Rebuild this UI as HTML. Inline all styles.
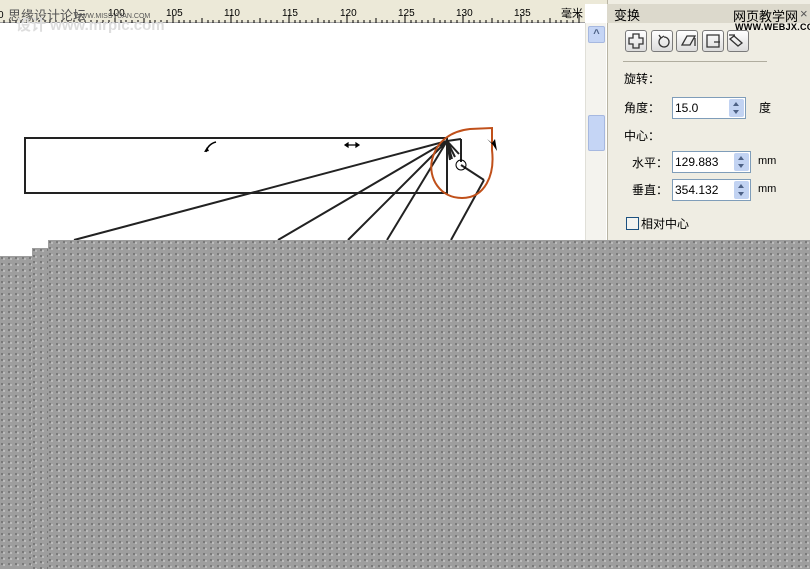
<!DOCTYPE html>
<html><head><meta charset="utf-8"><style>
*{margin:0;padding:0;box-sizing:border-box}
body{width:810px;height:569px;overflow:hidden;position:relative;background:#fff;font-family:"Liberation Sans","Noto Sans CJK SC",sans-serif;font-size:12px;color:#000}
.abs{position:absolute}
#ruler{left:0;top:0;width:585px;height:23px;background:#ece9d8;border-bottom:1px solid #a0a0a0}
#panel{left:607px;top:0;width:203px;height:240px;background:#efede3;border-left:1px solid #b8b4a4}
#hdr{left:607px;top:4px;width:203px;height:19px;background:#dcd9cc}
.gray{background-color:#9e9e9e;background-image:linear-gradient(#333,#333),linear-gradient(#fff,#fff);background-size:1px 1px,1px 1px;background-repeat:no-repeat}
.gray{background-image:radial-gradient(circle at 2px 2px,#222 0.7px,transparent 0.8px),radial-gradient(circle at 4px 3px,#fff 0.7px,transparent 0.8px);background-size:7px 6px,7px 6px;background-repeat:repeat,repeat}
.btn{width:22px;height:22px;border:1px solid #7a7a7a;border-radius:3px;background:linear-gradient(#fff,#dcdcdc);top:30px}
.inp{height:22px;border:1px solid #7f9db9;background:#fff;font-size:12px;padding:3px 2px}
.spin{position:absolute;right:1px;top:1px;width:15px;height:18px;background:#c2d3f2;border-radius:2px}
.spin:before{content:"";position:absolute;left:4px;top:3px;border:3px solid transparent;border-bottom:4px solid #4d6185;border-top:0}
.spin:after{content:"";position:absolute;left:4px;bottom:3px;border:3px solid transparent;border-top:4px solid #4d6185;border-bottom:0}
</style></head><body>
<div class="abs" style="left:0;top:0;width:810px;height:4px;background:#ece9d8"></div>
<div id="ruler" class="abs">
<svg width="585" height="23" style="position:absolute;left:0;top:0">
<g stroke="#000" stroke-width="1">
<path d="M4 20v3M10 20v3M16 20v3M21 20v3M27 20v3M33 20v3M39 20v3M45 20v3M50 20v3M56 20v3M62 20v3M68 20v3M74 20v3M80 20v3M85 20v3M91 20v3M97 20v3M103 20v3M109 20v3M115 15v8M121 20v3M126 20v3M132 20v3M138 20v3M144 18v5M150 20v3M155 20v3M161 20v3M167 20v3M173 15v8M179 20v3M184 20v3M190 20v3M196 20v3M202 18v5M208 20v3M213 20v3M219 20v3M225 20v3M231 15v8M237 20v3M242 20v3M248 20v3M254 20v3M260 18v5M266 20v3M271 20v3M277 20v3M283 20v3M289 15v8M295 20v3M300 20v3M306 20v3M312 20v3M318 18v5M324 20v3M329 20v3M335 20v3M341 20v3M347 15v8M353 20v3M358 20v3M364 20v3M370 20v3M376 18v5M382 20v3M387 20v3M393 20v3M399 20v3M405 15v8M411 20v3M416 20v3M422 20v3M428 20v3M434 18v5M440 20v3M445 20v3M451 20v3M457 20v3M463 15v8M469 20v3M474 20v3M480 20v3M486 20v3M492 18v5M498 20v3M503 20v3M509 20v3M515 20v3M521 15v8M527 20v3M532 20v3M538 20v3M544 20v3M550 18v5M556 20v3M561 20v3M567 20v3M573 20v3M579 15v8"/>
</g>
<g font-size="10" font-family="Liberation Sans,sans-serif">
<text x="-2" y="18">0</text><text x="108" y="16">100</text><text x="166" y="16">105</text><text x="224" y="16">110</text><text x="282" y="16">115</text><text x="340" y="16">120</text><text x="398" y="16">125</text><text x="456" y="16">130</text><text x="514" y="16">135</text>
</g>
<text x="583" y="17" font-size="11" text-anchor="end" font-family="Noto Sans CJK SC,sans-serif">毫米</text>
<text x="8" y="20" font-size="13" fill="#555" font-family="Noto Sans CJK SC,sans-serif">思缘设计论坛</text>
<text x="74" y="18" font-size="7" fill="#555">WWW.MISSYUAN.COM</text>
</svg>
</div>
<div class="abs" style="left:16px;top:14px;font:bold 15px 'Liberation Sans','Noto Sans CJK SC',sans-serif;color:#ddd">设计 www.mrpic.com</div>
<!-- scrollbar -->
<div class="abs" style="left:585px;top:23px;width:21px;height:220px;background:#f4f3ee;border-left:1px solid #e0dfd8"></div>
<div class="abs" style="left:588px;top:26px;width:17px;height:17px;background:#c5d5f5;border:1px solid #a6b8e0;border-radius:2px;color:#4d6185;font-size:11px;text-align:center;line-height:15px;font-weight:bold">^</div>
<div class="abs" style="left:588px;top:115px;width:17px;height:36px;background:#c5d5f5;border:1px solid #a6b8e0;border-radius:2px"></div>
<!-- drawing -->
<svg class="abs" style="left:0;top:23px" width="585" height="225">
<g transform="translate(0,-23)">
<rect x="25" y="138" width="422" height="55" fill="none" stroke="#222" stroke-width="2"/>
<g stroke="#222" stroke-width="2" fill="none">
<path d="M447 141L74 240M447 141L278 240M447 141L348 240M447 141L387 240M484 180L451 240"/>
<path d="M447 141L461 139M447 141L459 154M447 141L455 157M447 141L452 159M447 141L450 160M461 165L484 180M461 139L461 162"/>
</g>
<path d="M492 128L492 150C495 175 485 198 462 198C440 198 428 178 432 160C437 140 452 131 470 129Z" fill="none" stroke="#c0501a" stroke-width="2"/>
<circle cx="461" cy="165" r="5" fill="none" stroke="#000" stroke-width="1"/>
<path d="M206 152q2-8 10-10" stroke="#000" stroke-width="1.5" fill="none"/><path d="M204 152l3-5 2 4z"/>
<path d="M345 145h14M345 145l3-2v4zM359 145l-3-2v4z" stroke="#000" stroke-width="1.2"/>
<path d="M487 139l5 4 3-4 2 12-4-6" fill="#000"/>
</g>
</svg>
<!-- gray -->
<div class="abs gray" style="left:48px;top:240px;width:762px;height:329px"></div>
<div class="abs gray" style="left:32px;top:248px;width:16px;height:321px"></div>
<div class="abs gray" style="left:0;top:256px;width:32px;height:313px"></div>
<!-- panel -->
<div id="panel" class="abs"></div>
<div id="hdr" class="abs"></div>
<div class="abs" style="left:614px;top:5px;font-size:13px;font-family:'Noto Sans CJK SC',sans-serif">变换</div>
<div class="abs" style="left:733px;top:6px;font-size:13px;font-family:'Noto Sans CJK SC',sans-serif">网页教学网</div>
<div class="abs" style="left:735px;top:22px;font-size:9px;font-weight:bold;letter-spacing:0.3px">WWW.WEBJX.COM</div>
<div class="abs" style="left:800px;top:6px;font-size:13px;color:#555">×</div>
<div class="abs btn" style="left:625px"></div><div class="abs btn" style="left:651px"></div><div class="abs btn" style="left:676px"></div><div class="abs btn" style="left:702px"></div><div class="abs btn" style="left:727px"></div>
<svg class="abs" style="left:625px;top:30px" width="126" height="22" fill="none" stroke="#333" stroke-width="1.3">
<path d="M8 4h6v4h4v6h-4v4H8v-4H4V8h4z"/>
<path d="M36 8a5 5 0 1 0 3-1M34 5l2 3 3-2"/>
<path d="M57 15l5-9h8l-5 9zM70 8v8"/>
<path d="M82 5h12v12H82zM89 12h6"/>
<path d="M105 9l4-3 8 7-4 3zM104 5h6"/>
</svg>
<div class="abs" style="left:623px;top:61px;width:144px;height:1px;background:#b0ad9f"></div>
<div class="abs" style="left:624px;top:70px;font-size:12px">旋转：</div>
<div class="abs" style="left:624px;top:99px;font-size:12px">角度：</div>
<div class="abs inp" style="left:672px;top:97px;width:74px">15.0<div class="spin"></div></div>
<div class="abs" style="left:759px;top:99px">度</div>
<div class="abs" style="left:624px;top:127px">中心：</div>
<div class="abs" style="left:632px;top:154px">水平：</div>
<div class="abs inp" style="left:672px;top:151px;width:79px">129.883<div class="spin"></div></div>
<div class="abs" style="left:758px;top:155px;font-size:11px">mm</div>
<div class="abs" style="left:632px;top:181px">垂直：</div>
<div class="abs inp" style="left:672px;top:179px;width:79px">354.132<div class="spin"></div></div>
<div class="abs" style="left:758px;top:183px;font-size:11px">mm</div>
<div class="abs" style="left:626px;top:217px;width:13px;height:13px;border:1px solid #1c5180;background:#f4f4f0"></div>
<div class="abs" style="left:641px;top:215px">相对中心</div>
</body></html>
